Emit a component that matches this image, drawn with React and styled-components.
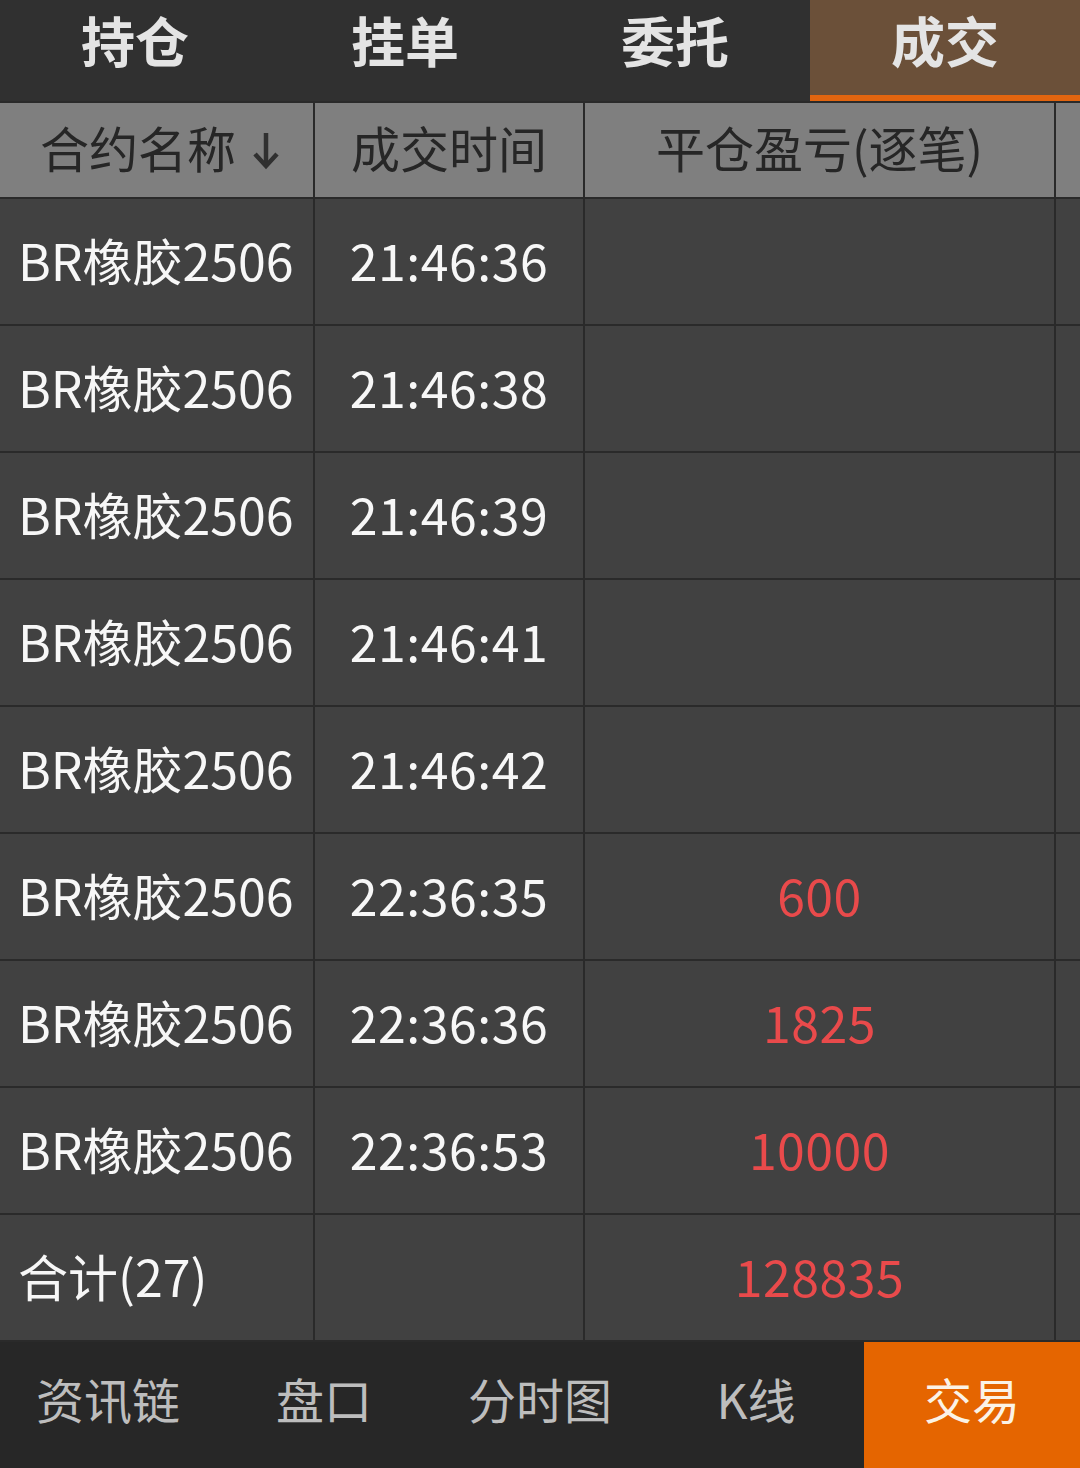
import React from "react";
import styled, { createGlobalStyle } from "styled-components";

const Global = createGlobalStyle`
  html, body { margin: 0; padding: 0; background: #2b2b2b; }
  body { font-family: "Noto Sans CJK SC", "Noto Sans", sans-serif; }
  * { box-sizing: border-box; }
`;

const Page = styled.div`
  width: 1080px;
  height: 1468px;
  display: flex;
  flex-direction: column;
  background: #2b2b2b;
  overflow: hidden;
`;

const TopTabs = styled.div`
  display: grid;
  grid-template-columns: repeat(4, 1fr);
  grid-template-rows: 101px;
  height: 101px;
  background: #303030;
`;

const TopTab = styled.div`
  display: flex;
  align-items: center;
  justify-content: center;
  height: 101px;
  line-height: 1;
  padding-bottom: 16px;
  font-size: 54px;
  font-weight: 700;
  color: #e4e4e4;
  background: ${(p) => (p.$active ? "#6b5039" : "transparent")};
  border-bottom: 6px solid ${(p) => (p.$active ? "#e3650f" : "transparent")};
`;

const Table = styled.div`
  display: grid;
  grid-template-columns: 313px 268px 469px 1fr;
  grid-auto-rows: 125px;
  grid-template-rows: 94px;
  gap: 2px;
  padding-top: 2px;
  padding-bottom: 2px;
  background: #2a2a2a;
`;

const HeadCell = styled.div`
  background: #7f7f7f;
  color: #262626;
  font-size: 49px;
  display: flex;
  align-items: center;
  justify-content: ${(p) => (p.$left ? "flex-start" : "center")};
  padding-left: ${(p) => (p.$left ? "40px" : "0")};
  padding-bottom: 8px;
  white-space: nowrap;
  gap: 16px;
`;

const Cell = styled.div`
  background: #414141;
  color: ${(p) => (p.$red ? "#e94a4b" : "#f7f7f7")};
  font-size: 50px;
  display: flex;
  align-items: center;
  justify-content: ${(p) => (p.$left ? "flex-start" : "center")};
  padding-left: ${(p) => (p.$left ? "18px" : "0")};
  padding-bottom: 6px;
  white-space: nowrap;
  letter-spacing: ${(p) => (p.$left ? "0px" : "0.5px")};
`;

const BottomNav = styled.div`
  display: grid;
  grid-template-columns: repeat(5, 1fr);
  flex: 1;
  background: #272727;
`;

const NavItem = styled.div`
  display: flex;
  align-items: center;
  justify-content: center;
  padding-bottom: 14px;
  font-size: 48px;
  color: ${(p) => (p.$active ? "#fbf3e6" : "#bdbdbd")};
  background: ${(p) => (p.$active ? "#e56500" : "transparent")};
`;

const ArrowIcon = styled.svg`
  margin-top: 8px;
`;

const Arrow = () => (
  <ArrowIcon width="28" height="40" viewBox="0 0 28 40" aria-hidden="true">
    <path d="M14 3 V35" stroke="#303030" strokeWidth="4.5" fill="none" />
    <path d="M3 24 L14 36 L25 24" stroke="#303030" strokeWidth="4.5" fill="none" />
  </ArrowIcon>
);

const rows = [
  ["BR橡胶2506", "21:46:36", ""],
  ["BR橡胶2506", "21:46:38", ""],
  ["BR橡胶2506", "21:46:39", ""],
  ["BR橡胶2506", "21:46:41", ""],
  ["BR橡胶2506", "21:46:42", ""],
  ["BR橡胶2506", "22:36:35", "600"],
  ["BR橡胶2506", "22:36:36", "1825"],
  ["BR橡胶2506", "22:36:53", "10000"],
  ["合计(27)", "", "128835"],
];

export default function App() {
  return (
    <Page>
      <Global />
      <TopTabs>
        <TopTab>持仓</TopTab>
        <TopTab>挂单</TopTab>
        <TopTab>委托</TopTab>
        <TopTab $active>成交</TopTab>
      </TopTabs>
      <Table>
        <HeadCell $left>
          合约名称
          <Arrow />
        </HeadCell>
        <HeadCell>成交时间</HeadCell>
        <HeadCell>平仓盈亏(逐笔)</HeadCell>
        <HeadCell />
        {rows.map((r, i) => (
          <React.Fragment key={i}>
            <Cell $left>{r[0]}</Cell>
            <Cell>{r[1]}</Cell>
            <Cell $red>{r[2]}</Cell>
            <Cell />
          </React.Fragment>
        ))}
      </Table>
      <BottomNav>
        <NavItem>资讯链</NavItem>
        <NavItem>盘口</NavItem>
        <NavItem>分时图</NavItem>
        <NavItem>K线</NavItem>
        <NavItem $active>交易</NavItem>
      </BottomNav>
    </Page>
  );
}
